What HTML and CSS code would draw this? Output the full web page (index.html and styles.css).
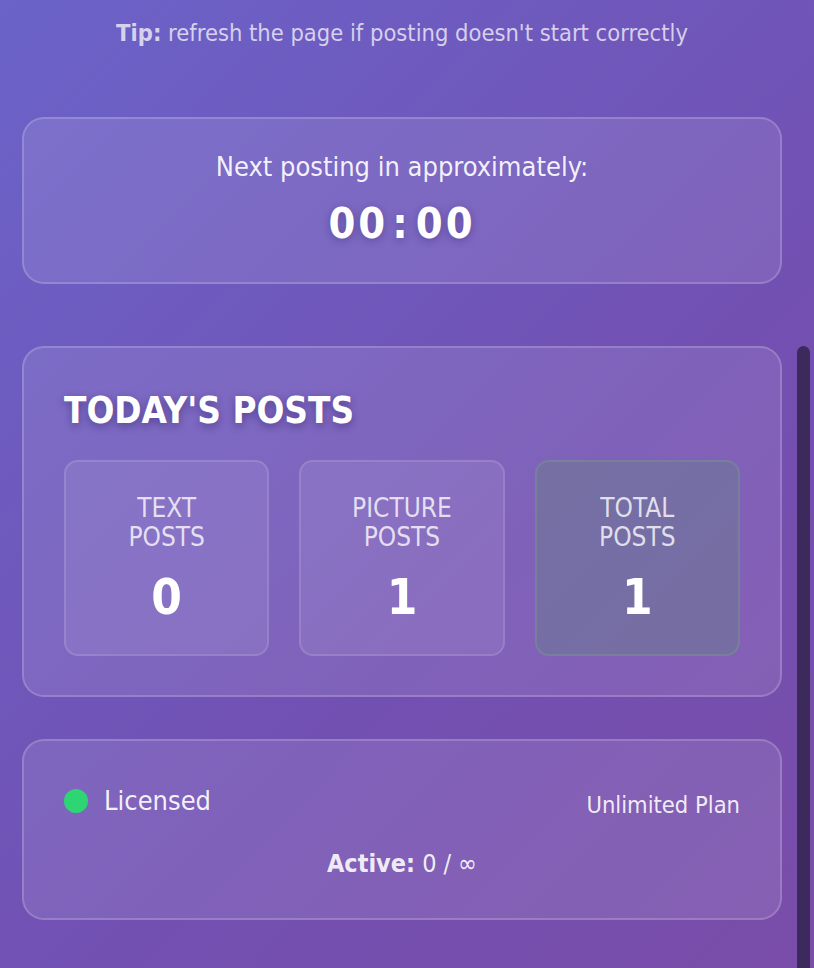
FILE: index.html
```html
<!DOCTYPE html>
<html lang="en">
<head>
<meta charset="utf-8">
<title>Poster</title>
<link rel="stylesheet" href="styles.css">
</head>
<body>
<main class="page">
  <p class="tip"><strong>Tip:</strong> refresh the page if posting doesn't start correctly</p>

  <section class="card countdown">
    <div class="countdown-label">Next posting in approximately:</div>
    <div class="countdown-time">00<span class="colon">:</span>00</div>
  </section>

  <section class="card stats">
    <h2 class="stats-title">TODAY'S POSTS</h2>
    <div class="stats-grid">
      <div class="stat">
        <div class="stat-label">TEXT<br>POSTS</div>
        <div class="stat-value">0</div>
      </div>
      <div class="stat">
        <div class="stat-label">PICTURE<br>POSTS</div>
        <div class="stat-value">1</div>
      </div>
      <div class="stat stat-total">
        <div class="stat-label">TOTAL<br>POSTS</div>
        <div class="stat-value">1</div>
      </div>
    </div>
  </section>

  <section class="card license">
    <div class="license-row">
      <div class="license-status"><span class="dot"></span>Licensed</div>
      <div class="license-plan">Unlimited Plan</div>
    </div>
    <div class="license-active"><strong>Active:</strong> 0 / ∞</div>
  </section>
</main>
<div class="scrollbar"><div class="scroll-thumb"></div></div>
</body>
</html>
```
FILE: styles.css
```css
html, body {
  margin: 0;
  padding: 0;
  height: 100%;
  overflow: hidden;
}
body {
  background: linear-gradient(135deg, #6b63c9 0%, #7250b2 60%, #7a4da9 100%);
  font-family: "DejaVu Sans Condensed", "DejaVu Sans", sans-serif;
  font-stretch: condensed;
  color: #fff;
}
.page {
  width: 760px;
  margin-left: 22px;
  padding-top: 18px;
}
.tip {
  margin: 0;
  text-align: center;
  font-size: 23.5px;
  line-height: 30px;
  color: rgba(255,255,255,0.72);
}
.tip strong { font-weight: bold; }

.card {
  box-sizing: border-box;
  background: rgba(255,255,255,0.1);
  border: 2px solid rgba(255,255,255,0.18);
  border-radius: 22px;
}
.countdown {
  margin-top: 69px;
  height: 167px;
  display: flex;
  flex-direction: column;
  align-items: center;
  padding-top: 31px;
}
.countdown-label {
  font-size: 27px;
  line-height: 34px;
  color: rgba(255,255,255,0.92);
}
.countdown-time {
  margin-top: 14px;
  font-size: 43px;
  line-height: 50px;
  font-weight: bold;
  letter-spacing: 3px;
  text-shadow: 0 2px 8px rgba(40,20,90,0.35);
}
.colon {
  margin: 0 5px 0 4px;
}

.stats {
  margin-top: 62px;
  height: 351px;
  padding: 40px 40px 0 40px;
}
.stats-title {
  margin: 0;
  font-size: 36.5px;
  line-height: 46px;
  font-weight: bold;
  text-shadow: 0 3px 8px rgba(40,20,90,0.45);
}
.stats-grid {
  margin-top: 26px;
  display: grid;
  grid-template-columns: repeat(3, 1fr);
  gap: 30px;
}
.stat {
  box-sizing: border-box;
  height: 196px;
  background: rgba(255,255,255,0.08);
  border: 2px solid rgba(255,255,255,0.12);
  border-radius: 14px;
  display: flex;
  flex-direction: column;
  align-items: center;
  padding-top: 32px;
}
.stat-total {
  background: rgba(110,120,150,0.6);
  border-color: rgba(120,140,150,0.6);
}
.stat-label {
  text-align: center;
  font-size: 26px;
  line-height: 29px;
  color: rgba(255,255,255,0.78);
}
.stat-value {
  margin-top: 18px;
  font-size: 49px;
  line-height: 56px;
  font-weight: bold;
}

.license {
  margin-top: 42px;
  height: 181px;
  padding: 40px 40px 0 40px;
}
.license-row {
  display: flex;
  justify-content: space-between;
  align-items: center;
}
.license-status {
  display: flex;
  align-items: center;
  font-size: 27px;
  line-height: 30px;
  color: rgba(255,255,255,0.92);
}
.dot {
  width: 24px;
  height: 24px;
  border-radius: 50%;
  background: #2ed573;
  margin-right: 16px;
}
.license-plan {
  font-size: 23.5px;
  line-height: 30px;
  padding-top: 9px;
  color: rgba(255,255,255,0.9);
}
.license-active {
  margin-top: 29px;
  text-align: center;
  font-size: 25px;
  line-height: 30px;
  color: rgba(255,255,255,0.9);
}

.scrollbar {
  position: fixed;
  top: 0;
  right: 0;
  width: 18px;
  height: 968px;
}
.scroll-thumb {
  position: absolute;
  left: 1px;
  top: 346px;
  width: 13px;
  height: 640px;
  border-radius: 7px;
  background: #3d2a5c;
}
```
